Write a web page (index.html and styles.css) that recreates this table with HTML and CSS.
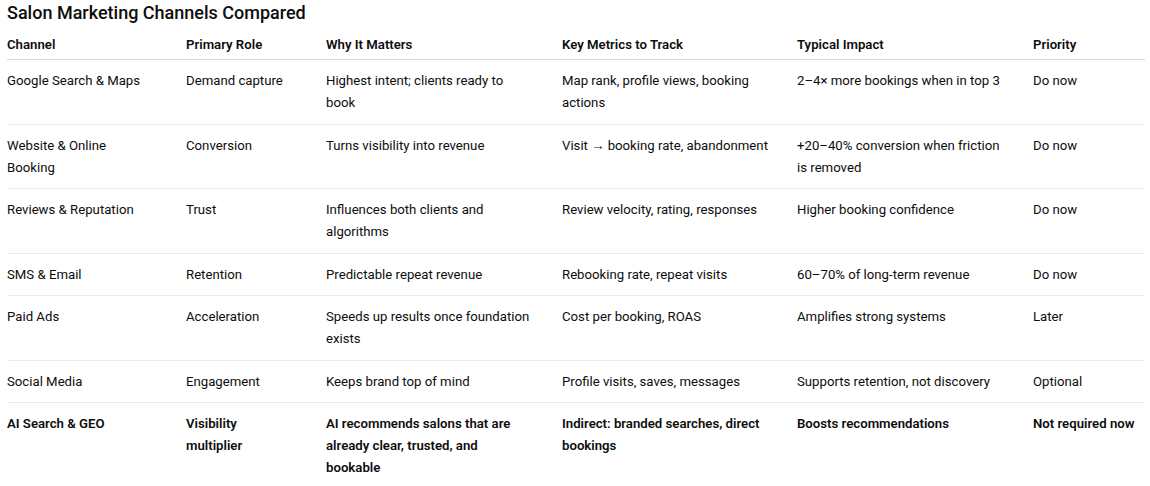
FILE: index.html
```html
<!DOCTYPE html>
<html lang="en">
<head>
<meta charset="utf-8">
<title>Salon Marketing Channels Compared</title>
<link rel="stylesheet" href="styles.css">
</head>
<body>
<main class="page">
  <h2 class="title">Salon Marketing Channels Compared</h2>
  <table class="grid">
    <colgroup>
      <col class="c1"><col class="c2"><col class="c3"><col class="c4"><col class="c5"><col class="c6">
    </colgroup>
    <thead>
      <tr>
        <th>Channel</th><th>Primary Role</th><th>Why It Matters</th><th>Key Metrics to Track</th><th>Typical Impact</th><th>Priority</th>
      </tr>
    </thead>
    <tbody>
      <tr>
        <td>Google Search &amp; Maps</td><td>Demand capture</td><td>Highest intent; clients ready to<br>book</td><td>Map rank, profile views, booking<br>actions</td><td>2–4× more bookings when in top 3</td><td>Do now</td>
      </tr>
      <tr>
        <td>Website &amp; Online<br>Booking</td><td>Conversion</td><td>Turns visibility into revenue</td><td>Visit → booking rate, abandonment</td><td>+20–40% conversion when friction<br>is removed</td><td>Do now</td>
      </tr>
      <tr>
        <td>Reviews &amp; Reputation</td><td>Trust</td><td>Influences both clients and<br>algorithms</td><td>Review velocity, rating, responses</td><td>Higher booking confidence</td><td>Do now</td>
      </tr>
      <tr>
        <td>SMS &amp; Email</td><td>Retention</td><td>Predictable repeat revenue</td><td>Rebooking rate, repeat visits</td><td>60–70% of long-term revenue</td><td>Do now</td>
      </tr>
      <tr>
        <td>Paid Ads</td><td>Acceleration</td><td>Speeds up results once foundation<br>exists</td><td>Cost per booking, ROAS</td><td>Amplifies strong systems</td><td>Later</td>
      </tr>
      <tr>
        <td>Social Media</td><td>Engagement</td><td>Keeps brand top of mind</td><td>Profile visits, saves, messages</td><td>Supports retention, not discovery</td><td>Optional</td>
      </tr>
      <tr class="strong">
        <td>AI Search &amp; GEO</td><td>Visibility<br>multiplier</td><td>AI recommends salons that are<br>already clear, trusted, and<br>bookable</td><td>Indirect: branded searches, direct<br>bookings</td><td>Boosts recommendations</td><td>Not required now</td>
      </tr>
    </tbody>
  </table>
</main>
</body>
</html>
```
FILE: styles.css
```css
html, body {
  margin: 0;
  padding: 0;
  background: #ffffff;
}

.page {
  padding: 0 5px 0 7px;
  font-family: Roboto, "Liberation Sans", sans-serif;
  font-size: 13.2px;
  color: #0d0d0d;
}

.title {
  margin: 0 0 3px;
  font-size: 18px;
  line-height: 26px;
  font-weight: 500;
  color: #0d0d0d;
}

.grid {
  width: 1138px;
  border-collapse: collapse;
  table-layout: fixed;
}

.c1 { width: 179px; }
.c2 { width: 140px; }
.c3 { width: 236px; }
.c4 { width: 235px; }
.c5 { width: 236px; }
.c6 { width: 112px; }

.grid th,
.grid td {
  text-align: left;
  vertical-align: top;
  padding: 10px 8px 9.5px 0;
  line-height: 22px;
  white-space: nowrap;
}

.grid th {
  font-weight: 600;
  padding-top: 5px;
  padding-bottom: 3px;
  border-bottom: 1px solid #d9d9d9;
}

.grid tbody tr {
  border-bottom: 1px solid #ececec;
}

.grid tbody tr:last-child {
  border-bottom: none;
}

.grid tr.strong td {
  font-weight: 600;
}
```
